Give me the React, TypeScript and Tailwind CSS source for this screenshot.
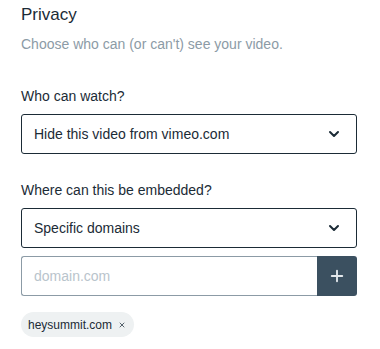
import { ChevronDown, Plus, X } from 'lucide-react';

const font = { fontFamily: '"Liberation Sans", Arial, sans-serif' };

function Select({ value }: { value: string }) {
  return (
    <div className="flex h-10 w-[336px] items-center justify-between rounded-[3px] border border-[#1b2b36] bg-white pl-3 pr-[14px]">
      <span className="text-[14px] leading-5 text-[#1b2b36]">{value}</span>
      <ChevronDown className="h-[16px] w-[16px] text-[#1b2b36]" strokeWidth={3} />
    </div>
  );
}

export default function App() {
  return (
    <div className="min-h-screen bg-white pl-[21px] pt-[3px]" style={font}>
      <h2 className="text-[17px] leading-6 text-[#1b2b36]">Privacy</h2>
      <p className="mt-[7px] text-[14px] leading-5 text-[#8c9ba6]">
        Choose who can (or can't) see your video.
      </p>

      <label className="mt-8 block text-[14px] leading-5 text-[#1b2b36]">Who can watch?</label>
      <div className="mt-2">
        <Select value="Hide this video from vimeo.com" />
      </div>

      <label className="mt-[26px] block text-[14px] leading-5 text-[#1b2b36]">
        Where can this be embedded?
      </label>
      <div className="mt-2">
        <Select value="Specific domains" />
      </div>

      <div className="mt-2 flex h-10 w-[336px]">
        <input
          placeholder="domain.com"
          className="h-10 min-w-0 flex-1 rounded-l-[3px] border border-r-0 border-[#8c9ba6] pl-3 text-[14px] text-[#1b2b36] outline-none placeholder:text-[#b9c4cc]"
        />
        <button className="flex h-10 w-10 items-center justify-center rounded-r-[3px] bg-[#3b5060] text-[#e3e8ec]">
          <Plus className="h-[18px] w-[18px]" strokeWidth={2.5} />
        </button>
      </div>

      <div className="mt-4 inline-flex h-[25px] items-center gap-[6px] rounded-full bg-[#eef1f2] pl-[7px] pr-[8px]">
        <span className="text-[12px] leading-4 text-[#1b2b36]">heysummit.com</span>
        <X className="h-[8px] w-[8px] text-[#55626c]" strokeWidth={3} />
      </div>
    </div>
  );
}
